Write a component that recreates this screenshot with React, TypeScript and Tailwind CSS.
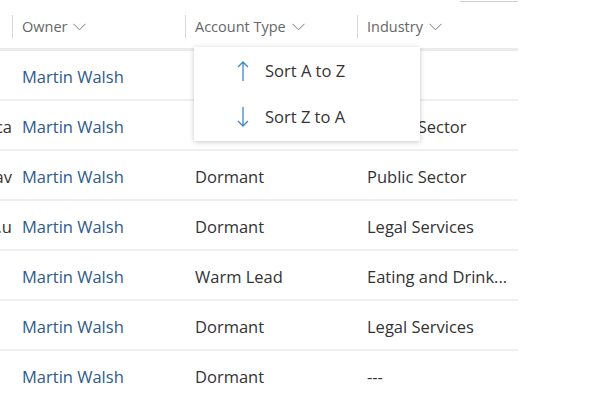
import React from "react";

const font = { fontFamily: '"Open Sans", "Segoe UI", sans-serif' };

function Chevron() {
  return (
    <svg width="13" height="8" viewBox="0 0 13 8" className="ml-[6px] mt-[1px]">
      <path d="M0.5 0.8 L6.5 6.8 L12.5 0.8" fill="none" stroke="#7a7a7a" strokeWidth="1" />
    </svg>
  );
}

const rows = [
  { c0: "", type: "", ind: "" },
  { c0: "ca", type: "", ind: "Public Sector" },
  { c0: "av", type: "Dormant", ind: "Public Sector" },
  { c0: "g.u", type: "Dormant", ind: "Legal Services" },
  { c0: "", type: "Warm Lead", ind: "Eating and Drink..." },
  { c0: "", type: "Dormant", ind: "Legal Services" },
  { c0: "", type: "Dormant", ind: "---" },
];

export default function App() {
  return (
    <div className="relative w-[598px] h-[396px] overflow-hidden bg-white" style={font}>
      <div className="absolute left-[460px] top-[1px] w-[58px] h-px bg-[#d0d0d0]" />
      <div className="w-[518px]">
        <div className="flex h-[51px] border-b-[3px] border-[#ebebeb] text-[14.5px] text-[#666] pt-[1px]">
          <div className="w-[12px]" />
          <div className="w-[173px] flex items-center border-l border-l-[#d6d6d6] mt-[14px] mb-[10px] pl-[9px] font-light">
            <span className="font-normal">Owner</span><Chevron />
          </div>
          <div className="w-[172px] flex items-center border-l border-l-[#d6d6d6] mt-[14px] mb-[10px] pl-[9px]">
            Account Type<Chevron />
          </div>
          <div className="flex-1 flex items-center border-l border-l-[#d6d6d6] mt-[14px] mb-[10px] pl-[9px]">
            Industry<Chevron />
          </div>
        </div>
        {rows.map((r, i) => (
          <div key={i} className="flex h-[50px] border-b-2 border-[#efefef] items-center pt-[4px] text-[16.5px] text-[#333]">
            <div className="w-[12px] overflow-hidden whitespace-nowrap flex justify-end">
              <span>{r.c0}</span>
            </div>
            <div className="w-[173px] pl-[10px] text-[#2e5a8c]">Martin Walsh</div>
            <div className="w-[172px] pl-[10px]">{r.type}</div>
            <div className="flex-1 pl-[10px] whitespace-nowrap overflow-hidden">{r.ind}</div>
          </div>
        ))}
      </div>
      <div className="absolute left-[194px] top-[47px] w-[226px] h-[94px] bg-white shadow-[0_1px_5px_rgba(0,0,0,0.22)] text-[16.5px] text-[#333] flex flex-col">
        <div className="flex items-center h-[48px] pl-[43px]">
          <svg width="12" height="22" viewBox="0 0 12 22" className="mr-[16px]">
            <path d="M6 2 V21 M1 7 L6 2 L11 7" fill="none" stroke="#3d8bbd" strokeWidth="1.3" />
          </svg>
          Sort A to Z
        </div>
        <div className="flex items-center h-[44px] pl-[43px]">
          <svg width="12" height="22" viewBox="0 0 12 22" className="mr-[16px]">
            <path d="M6 1 V20 M1 15 L6 20 L11 15" fill="none" stroke="#3d8bbd" strokeWidth="1.3" />
          </svg>
          Sort Z to A
        </div>
      </div>
    </div>
  );
}
